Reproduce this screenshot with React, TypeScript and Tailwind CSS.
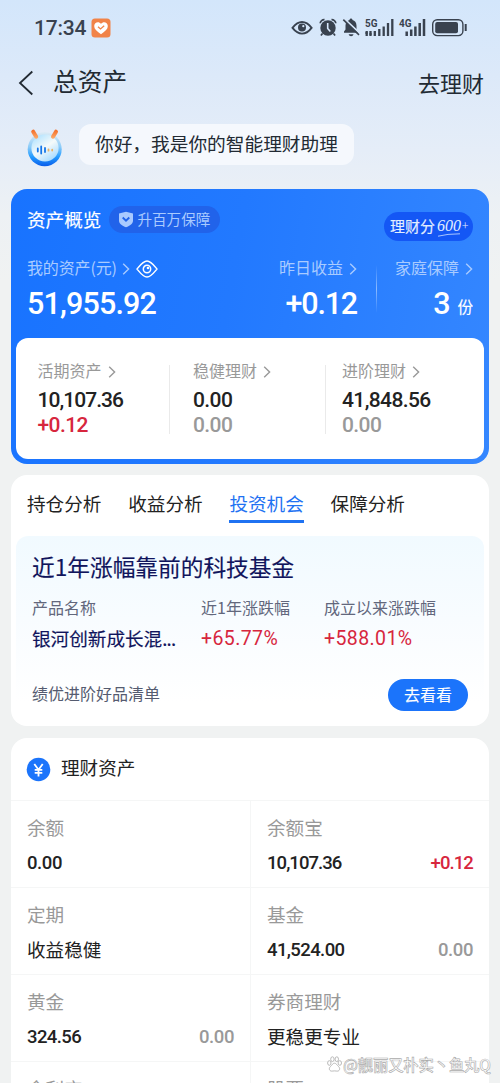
import React from "react";

const NUM = "font-['Roboto','Noto_Sans_CJK_SC',sans-serif] font-medium";
const SEMI = "[-webkit-text-stroke:0.15px_currentColor]";

function Chevron({ className }: { className: string }) {
  return (
    <svg viewBox="0 0 8 12" className={`h-3 w-2 shrink-0 ${className}`} fill="none" stroke="currentColor" strokeWidth="1.4">
      <path d="M1.2 0.8 6.6 6 1.2 11.2" />
    </svg>
  );
}

function StatusIcons() {
  return (
    <svg width="180" height="24" viewBox="290 16 180 24" fill="none" className="text-[#39424f]">
      <path d="M292.5 27.8C295.5 24 298.5 22 302 22s6.700 2 9.600 5.800C308.700 31.600 305.500 33.600 302 33.600s-6.500-2-9.500-5.800Z" stroke="currentColor" strokeWidth="1.900" />
      <circle cx="302" cy="27.600" r="4" fill="currentColor" />
      <circle cx="303.300" cy="26.200" r="1.100" fill="#d7e7fb" />
      <circle cx="328" cy="28" r="7.700" fill="currentColor" />
      <path d="M320.200 23.300a4 4 0 0 1 4.300-3.700M335.800 23.300a4 4 0 0 0-4.300-3.700M322.500 33.500l-1.600 2M333.500 33.500l1.600 2" stroke="currentColor" strokeWidth="1.700" />
      <path d="M327.700 23v5.500l2.600 3" stroke="#d7e7fb" strokeWidth="1.600" />
      <path d="M344 32.800V31.500l1.500-2V25.500c0-3 1.900-4.800 4-5.400.2-2 2.800-2 3 0 2.200.6 4 2.400 4 5.400v4l1.500 2v1.300Z" fill="currentColor" />
      <path d="M348.700 34.300h4.800c-.3 2.600-4.500 2.600-4.800 0Z" fill="currentColor" />
      <path d="M344.500 18.800 360.500 34" stroke="#d7e7fb" strokeWidth="1.800" />
      <path d="M343.300 19.700 359 34.800" stroke="currentColor" strokeWidth="1.600" />
      <path d="M366.700 31v5M370.500 31v5M374.800 31v5M379.300 29v7M383.700 26.500v9.500M388 23v13M392.300 19v17" stroke="currentColor" strokeWidth="2.300" />
      <path d="M365 33h3M369 34h3" stroke="currentColor" strokeWidth="1" />
      <path d="M406.700 31.500v4.500M411.200 29.500v6.500M415.400 26.500v9.500M419.700 23v13M424 19v17" stroke="currentColor" strokeWidth="2.500" />
      <text x="365" y="27.200" fontSize="11" fontWeight="700" fontFamily="Roboto, sans-serif" fill="currentColor" textLength="12.500" lengthAdjust="spacingAndGlyphs">5G</text>
      <text x="399" y="27.200" fontSize="11" fontWeight="700" fontFamily="Roboto, sans-serif" fill="currentColor" textLength="12.500" lengthAdjust="spacingAndGlyphs">4G</text>
      <rect x="432.700" y="19.700" width="30.200" height="15.900" rx="4.500" stroke="currentColor" strokeWidth="1.400" />
      <rect x="435.200" y="22.100" width="22.800" height="11.100" rx="2" fill="currentColor" />
      <path d="M465.700 24v7" stroke="currentColor" strokeWidth="2" />
    </svg>
  );
}

function Mascot() {
  return (
    <svg width="36" height="42" viewBox="26 128 36 42" fill="none">
      <defs>
        <linearGradient id="ring" x1="44" y1="133" x2="44" y2="167" gradientUnits="userSpaceOnUse">
          <stop offset="0" stopColor="#d9eaf5" />
          <stop offset="0.400" stopColor="#8fcdf8" />
          <stop offset="0.700" stopColor="#249cff" />
          <stop offset="1" stopColor="#0757e8" />
        </linearGradient>
        <linearGradient id="face" x1="34" y1="138" x2="50" y2="161" gradientUnits="userSpaceOnUse">
          <stop offset="0" stopColor="#b5e4ff" />
          <stop offset="0.500" stopColor="#f5fafa" />
          <stop offset="1" stopColor="#a9dcff" />
        </linearGradient>
        <linearGradient id="horn" x1="0" y1="130" x2="0" y2="140" gradientUnits="userSpaceOnUse">
          <stop offset="0" stopColor="#f36d28" />
          <stop offset="1" stopColor="#ffb777" />
        </linearGradient>
      </defs>
      <circle cx="44.700" cy="149.300" r="17" fill="url(#ring)" />
      <circle cx="45" cy="148" r="13.600" fill="url(#face)" />
      <path d="M33.200 131.700 36.200 136.700M56 131.700 53 136.700" stroke="url(#horn)" strokeWidth="4" strokeLinecap="round" />
      <path d="M37.800 148.500v3M41.200 146.500v7M45 148v4" stroke="#1677e8" strokeWidth="1.800" strokeLinecap="round" />
      <path d="M48.500 149.500v1.200M52.200 149.700v.8" stroke="#e8b266" strokeWidth="1.800" strokeLinecap="round" />
    </svg>
  );
}

function Holding({ label, value, sub, tone, tracking }: { label: string; value: string; sub: string; tone: string; tracking: string }) {
  return (
    <div className="pt-[19px]">
      <div className="flex h-[26px] items-center gap-[6px] text-[16px] text-[#999]">
        {label}
        <Chevron className="mt-[3px] text-[#999]" />
      </div>
      <div className={`mt-[4px] text-[21px] leading-[26px] text-[#222] ${NUM} ${tracking}`}>{value}</div>
      <div className={`relative -top-px text-[21px] leading-[26px] tracking-[-0.6px] ${NUM} ${tone}`}>{sub}</div>
    </div>
  );
}

type Cell = { label: string; value: string; kind?: string; gain?: string; gainTone?: string };
const cells: Cell[] = [
  { label: "余额", value: "0.00", kind: "tracking-[-0.4px]" },
  { label: "余额宝", value: "10,107.36", kind: "tracking-[-0.95px]", gain: "+0.12", gainTone: "text-[#d7263d] tracking-[-0.9px]" },
  { label: "定期", value: "收益稳健" },
  { label: "基金", value: "41,524.00", kind: "tracking-[-0.6px]", gain: "0.00", gainTone: "text-[#999] tracking-[-0.4px]" },
  { label: "黄金", value: "324.56", kind: "tracking-[-0.6px]", gain: "0.00", gainTone: "text-[#999] tracking-[-0.4px]" },
  { label: "券商理财", value: "更稳更专业" },
  { label: "余利宝", value: "" },
  { label: "股票", value: "" },
];

export default function App() {
  return (
    <div className="relative h-[1083px] w-[500px] overflow-hidden bg-[#f0f2f2] font-['Noto_Sans_CJK_SC',sans-serif] text-[#222]">
      <div className="flex h-[1083px] flex-col bg-[linear-gradient(180deg,#d3e6fb_0px,#dce9f9_75px,#e5edf8_150px,#edf1f4_215px,#f0f2f2_280px)]">
        <div className="flex h-[56px] shrink-0 items-center justify-between pr-[30px] pl-[34px]">
          <div className="flex items-center gap-[5px]">
            <span className="font-['Roboto',sans-serif] text-[21px] leading-6 font-medium tracking-[-0.2px] text-[#39424f]">17:34</span>
            <svg width="20" height="20" viewBox="0 0 20 20" fill="none">
              <rect x="0.500" y="0.500" width="19" height="19" rx="3.500" fill="#f18348" />
              <path d="M10 16.300C5.500 13.200 3.200 11 3.200 8c0-4 4.700-5.100 6.800-2.200C12.100 2.900 16.800 4 16.800 8c0 3-2.300 5.200-6.800 8.300Z" fill="#fff" />
              <path d="M7 8.800 9.500 11l3.700-3.300" stroke="#f18348" strokeWidth="1.300" />
            </svg>
          </div>
          <StatusIcons />
        </div>

        <div className="flex h-[54px] shrink-0 items-center pr-4 pl-[18px]">
          <svg width="16" height="26" viewBox="0 0 16 26" fill="none" stroke="#222a33" strokeWidth="1.800">
            <path d="M14.300 1.500 2 13l12.300 11.500" />
          </svg>
          <h1 className="-mt-[4px] ml-[19px] text-[24.700px] font-normal text-[#222a33]">总资产</h1>
          <span className="-mt-[2px] ml-auto text-[22px] text-[#222a33]">去理财</span>
        </div>

        <div className="flex h-[79px] shrink-0 items-start pt-[14px] pl-[26px]">
          <div className="mt-1"><Mascot /></div>
          <div className="ml-[17px] flex h-[41px] w-[275px] items-center rounded-xl bg-[#f5f8fd] pl-4 text-[18.700px] whitespace-nowrap text-[#222a33]">
            <span className="-mt-0.5">你好，我是你的智能理财助理</span>
          </div>
        </div>

        <section className="mx-[11px] flex h-[275px] shrink-0 flex-col rounded-[16px] bg-[linear-gradient(100deg,#1873ff_0%,#2279ff_45%,#3587ff_100%)] px-[5px] pb-[5px] text-white">
          <div className="flex h-[66px] items-start pt-[17px] pr-[11px] pl-[11px]">
            <h2 className={`text-[18.600px] leading-[25px] font-normal ${SEMI}`}>资产概览</h2>
            <div className="ml-2 flex h-[27px] w-[111px] items-center rounded-full bg-[#2163ea] pl-[9px] text-[14.600px] whitespace-nowrap text-[#a9caff]">
              <svg width="16" height="17" viewBox="0 0 16 17" className="mr-[3px] shrink-0">
                <path d="M8 .7 15 2.500v7.200c0 3-3 5-7 6.600-4-1.600-7-3.600-7-6.600V2.500Z" fill="#a9caff" />
                <path d="M4.700 6.500 8 9.700l3.300-3.200" fill="none" stroke="#2163ea" strokeWidth="1.800" />
              </svg>
              <span className="-mt-0.5">升百万保障</span>
            </div>
            <div className="mt-[6px] ml-auto flex h-[29px] w-[89px] items-center rounded-full bg-[#1457f5] pl-[6px] text-[15px] whitespace-nowrap text-[#e3eeff]">
              <span className={SEMI}>理财分</span>
              <span className="relative -mt-[1px] ml-[2px] font-['Liberation_Serif',serif] text-[16px] italic">
                600<span className="align-[1px] text-[12px]">+</span>
                <svg className="absolute top-[19px] left-0" width="24" height="4" viewBox="0 0 24 4" fill="none" stroke="#b9d1ff" strokeWidth="0.900">
                  <path d="M1 3.200Q10 .8 23 .8" />
                </svg>
              </span>
            </div>
          </div>

          <div className="flex h-[83px] pr-[11px] pl-[11px]">
            <div className="w-[180px]">
              <div className="flex h-[26px] items-center text-[16px] whitespace-nowrap text-[#a9cbff]">
                <span className="-mt-0.5 tracking-[-0.15px]">我的资产(元)</span>
                <Chevron className="mt-0.5 ml-[5px]" />
                <svg width="22" height="18" viewBox="0 0 22 18" className="mt-0.5 ml-[6px]" fill="none" stroke="#fff" strokeWidth="1.500">
                  <path d="M1 9C3.500 6 7 1 11 1s7.500 5 10 8c-2.500 3-6 8-10 8S3.500 12 1 9Z" strokeLinejoin="round" />
                  <circle cx="11" cy="9" r="3.700" />
                  <circle cx="12" cy="8" r="1.300" fill="#fff" stroke="none" />
                </svg>
              </div>
              <div className={`mt-[3px] text-[30.500px] leading-[40px] tracking-[-0.850px] ${NUM}`}>51,955.92</div>
            </div>
            <div className="flex w-[150px] flex-col items-end">
              <div className="flex h-[26px] items-center gap-[6px] text-[16px] text-[#a9cbff]"><span className="-mt-0.5">昨日收益</span><Chevron className="mt-0.5" /></div>
              <div className={`mt-[3px] text-[30.500px] leading-[40px] tracking-[-1.200px] ${NUM}`}>+0.12</div>
            </div>
            <div className="mt-[10px] ml-[19px] h-[48px] w-px bg-[linear-gradient(180deg,transparent,#8dbbff_50%,transparent)]" />
            <div className="flex flex-1 flex-col items-end">
              <div className="flex h-[26px] items-center gap-[6px] text-[16px] text-[#a9cbff]"><span className="-mt-0.5">家庭保障</span><Chevron className="mt-0.5" /></div>
              <div className="mt-[3px] flex h-10 items-baseline">
                <span className={`text-[30.500px] leading-[40px] ${NUM}`}>3</span>
                <span className={`relative -top-px ml-[7px] text-[15.500px] ${SEMI}`}>份</span>
              </div>
            </div>
          </div>

          <div className="flex h-[121px] rounded-[12px] bg-white">
            <div className="w-[153px] pl-[21.5px]"><Holding label="活期资产" value="10,107.36" sub="+0.12" tone="text-[#d7263d]" tracking="tracking-[-0.950px]" /></div>
            <div className="mt-[27px] h-[69px] w-px bg-[#eaeaea]" />
            <div className="w-[155px] pl-[23px]"><Holding label="稳健理财" value="0.00" sub="0.00" tone="text-[#999]" tracking="tracking-[-0.600px]" /></div>
            <div className="mt-[27px] h-[69px] w-px bg-[#eaeaea]" />
            <div className="pl-4"><Holding label="进阶理财" value="41,848.56" sub="0.00" tone="text-[#999]" tracking="tracking-[-0.600px]" /></div>
          </div>
        </section>

        <section className="mx-[11px] mt-[11px] flex h-[251px] shrink-0 flex-col rounded-[16px] bg-white px-[5px]">
          <nav className="flex h-[61px] gap-[26.800px] pt-[13px] pl-[11px] text-[18.600px] leading-[29px] whitespace-nowrap text-[#222]">
            <span>持仓分析</span>
            <span>收益分析</span>
            <span className="h-[35px] border-b-[3px] border-[#1f72f2] text-[#1f72f2]">投资机会</span>
            <span>保障分析</span>
          </nav>
          <div className="flex h-[185px] flex-col rounded-[12px] bg-[linear-gradient(180deg,#f1faff_0%,#f8fcff_45%,#ffffff_90%)] pr-4 pl-[16px]">
            <h3 className={`mt-[14px] text-[22.700px] leading-[34px] font-normal whitespace-nowrap text-[#10145c] ${SEMI}`}>近1年涨幅靠前的科技基金</h3>
            <div className="mt-[10px] grid grid-cols-[169px_123px_1fr] text-[16px] leading-[26px] whitespace-nowrap text-[#62677c]">
              <span>产品名称</span>
              <span>近1年涨跌幅</span>
              <span>成立以来涨跌幅</span>
            </div>
            <div className="mt-[4px] grid grid-cols-[169px_123px_1fr] text-[18.600px] leading-[28px] whitespace-nowrap">
              <span className={`text-[#10145c] ${SEMI}`}>银河创新成长混<span className="tracking-[-0.800px]">...</span></span>
              <span className="pt-px font-['Roboto',sans-serif] text-[19.500px] tracking-[0.400px] text-[#d7263d]">+65.77%</span>
              <span className="pt-px font-['Roboto',sans-serif] text-[19.500px] tracking-[0.400px] text-[#d7263d]">+588.01%</span>
            </div>
            <div className="mt-[26px] flex h-8 items-center justify-between">
              <span className="-mt-[4px] text-[16px] text-[#555b70]">绩优进阶好品清单</span>
              <button className={`flex h-8 w-20 items-center justify-center rounded-full bg-[#1b74fb] text-[16px] text-white ${SEMI}`}><span className="-mt-0.5">去看看</span></button>
            </div>
          </div>
        </section>

        <section className="mx-[11px] mt-3 h-[400px] shrink-0 rounded-t-[16px] bg-white">
          <div className="flex h-[62px] items-center pl-[15px]">
            <svg width="25" height="25" viewBox="0 0 25 25" fill="none">
              <circle cx="12.500" cy="12.500" r="11.800" fill="#1b74fb" />
              <path d="M8.300 7 12.500 12.700 16.700 7M12.500 12.500V19.500M8.700 12.800h7.600M8.700 15.900h7.600" stroke="#fff" strokeWidth="1.800" />
            </svg>
            <span className="-mt-[4px] ml-[10px] text-[18.600px] text-[#222]">理财资产</span>
          </div>
          <div className="grid grid-cols-[239px_239px]">
            {cells.map((c, i) => (
              <div key={c.label} className={`h-[87px] border-t border-[#f5f6f6] px-4 pt-[13px] ${i % 2 ? "border-l" : ""}`}>
                <div className="text-[18.600px] leading-[26px] text-[#999]">{c.label}</div>
                <div className="mt-[8px] flex h-[28px] items-center justify-between">
                  <span className={c.kind ? `pt-[2px] text-[18.500px] leading-[28px] ${NUM} ${c.kind}` : "text-[18.600px] leading-[26px]"}>{c.value}</span>
                  {c.gain && <span className={`pt-[2px] text-[18.500px] leading-[28px] ${NUM} ${c.gainTone}`}>{c.gain}</span>}
                </div>
              </div>
            ))}
          </div>
        </section>
      </div>

      <div className="absolute top-[1053px] left-[327px] flex items-center text-[15.400px] leading-[22px] font-medium whitespace-nowrap text-white [-webkit-text-stroke:0.600px_#aaa]">
        <svg width="15" height="16" viewBox="0 0 15 16" fill="#fff" stroke="#aaa" strokeWidth="0.800">
          <ellipse cx="2.300" cy="7" rx="1.700" ry="2.300" />
          <ellipse cx="5.400" cy="3.200" rx="1.700" ry="2.400" />
          <ellipse cx="9.800" cy="3.200" rx="1.700" ry="2.400" />
          <ellipse cx="12.800" cy="7" rx="1.700" ry="2.300" />
          <path d="M7.500 7.200c1.800 0 2.500 2 4 3.300 2.400 2.100.8 5-1.700 4.600-1.600-.3-3-.3-4.600 0-2.500.4-4.100-2.500-1.700-4.600 1.500-1.300 2.200-3.300 4-3.300Z" />
        </svg>
        <span className="ml-px tracking-[-0.200px]">@靓丽又朴实丶鱼丸Q</span>
      </div>
    </div>
  );
}
